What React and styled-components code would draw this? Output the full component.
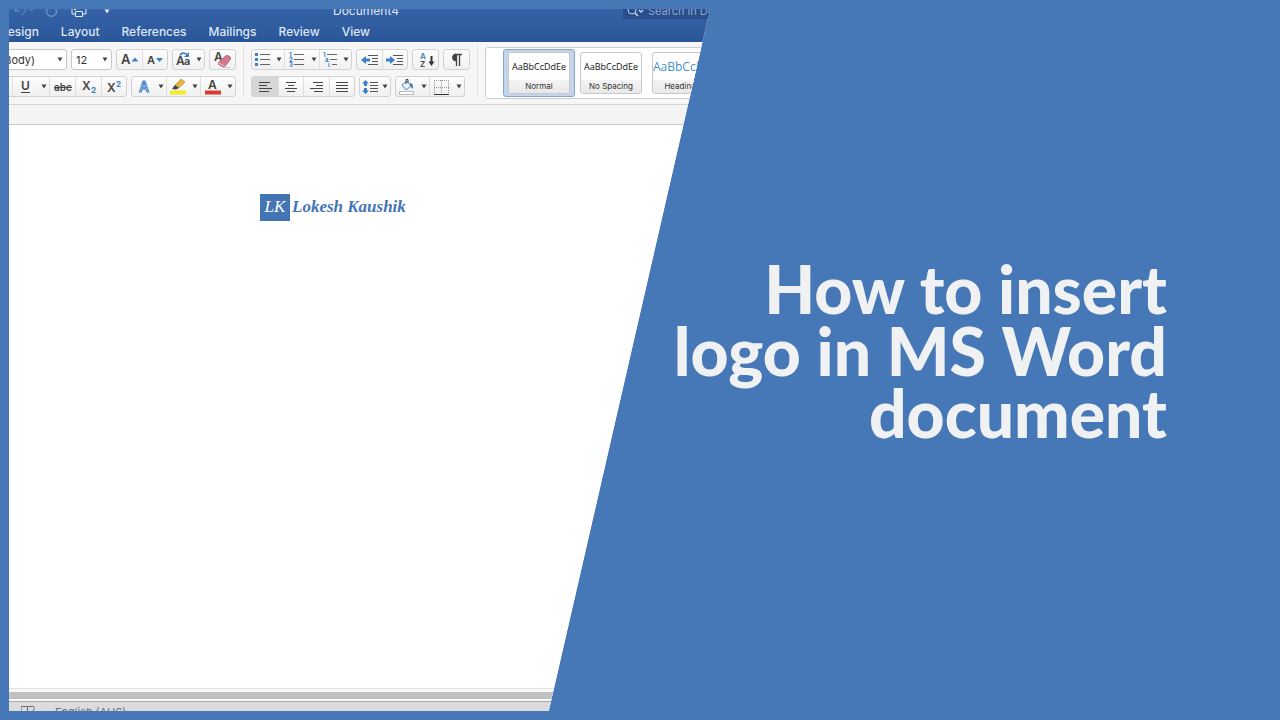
import styled, { createGlobalStyle } from 'styled-components';

const GlobalStyle = createGlobalStyle`
  * {
    box-sizing: border-box;
  }
  body {
    margin: 0;
    background: #4677b7;
    font-family: Inter, 'Liberation Sans', sans-serif;
  }
  button, select, input {
    font-family: inherit;
    margin: 0;
    padding: 0;
  }
`;

const Page = styled.main`
  display: grid;
  grid-template-columns: 540fr 161fr 570fr;
  min-height: 100vh;
  padding: 9px 0 9px 9px;
  background: #4677b7;
`;

const WordWindow = styled.section`
  grid-column: 1 / 3;
  grid-row: 1;
  display: flex;
  flex-direction: column;
  min-width: 0;
  overflow: hidden;
  background: #fff;
  clip-path: polygon(0 0, 100% 0, 77% 100%, 0 100%);
`;

const Header = styled.header`
  height: 33px;
  background: linear-gradient(#3663a7, #2a5699);
`;

const TitleBar = styled.div`
  display: grid;
  grid-template-columns: 324px 1fr 87px;
  align-items: center;
  height: 20px;
  margin-top: -8px;
  color: #dfe7f3;
  font-size: 12px;
  line-height: 16px;
`;

const QuickAccess = styled.div`
  display: flex;
  align-items: center;
  height: 20px;
`;

const QuickButton = styled.button`
  display: flex;
  align-items: center;
  justify-content: center;
  width: 28px;
  height: 20px;
  border: 0;
  background: none;
  color: ${({ $dim }) => ($dim ? '#6f90c2' : '#e6edf7')};
`;

const SearchBox = styled.label`
  display: flex;
  align-items: center;
  gap: 4px;
  height: 16px;
  padding-left: 4px;
  background: #284f8b;
  color: #c6d3e8;
  svg {
    flex: none;
  }
  input {
    flex: 1;
    min-width: 0;
    border: 0;
    background: none;
    font-size: 11px;
    line-height: 16px;
  }
  input::placeholder {
    color: #8ea6cc;
  }
`;

const Tabs = styled.nav`
  display: flex;
  gap: 22px;
  height: 21px;
  margin-left: -10px;
`;

const Tab = styled.button`
  border: 0;
  background: none;
  color: #dde6f4;
  font-size: 12px;
  font-weight: 500;
  line-height: 21px;
`;

const Ribbon = styled.div`
  display: flex;
  height: 63px;
  padding: 7px 0;
  border-bottom: 1px solid #d4d4d4;
  background: #f6f6f6;
`;

const RibbonGroup = styled.div`
  display: flex;
  flex: none;
  flex-direction: column;
  gap: 6px;
  width: ${({ $width }) => $width}px;
  overflow: hidden;
`;

const Row = styled.div`
  display: flex;
  gap: 4px;
  height: 21px;
  justify-content: ${({ $end }) => ($end ? 'flex-end' : 'flex-start')};
`;

const Separator = styled.div`
  flex: none;
  width: 1px;
  margin: -4px 7px 0 7px;
  background: #e2e2e2;
`;

const ButtonSet = styled.div`
  display: flex;
  flex: none;
  height: 21px;
  border: 1px solid #d2d2d2;
  border-radius: 3px;
  background: linear-gradient(#fdfdfd, #f0f0f0);
  overflow: hidden;
`;

const ToolButton = styled.button`
  display: flex;
  align-items: center;
  justify-content: center;
  flex: none;
  width: ${({ $width }) => $width}px;
  height: 19px;
  border: 0;
  border-left: ${({ $divider }) => ($divider ? '1px solid #dedede' : '0')};
  background: ${({ $active }) => ($active ? '#d6d6d6' : 'none')};
  color: #444;
`;

const SelectBox = styled.label`
  display: flex;
  align-items: center;
  flex: none;
  width: ${({ $width }) => $width}px;
  height: 21px;
  border: 1px solid #c6c6c6;
  border-radius: 3px;
  background: #fff;
  color: #444;
  select {
    flex: 1;
    min-width: 0;
    padding: 0 ${({ $gap }) => $gap}px 0 4px;
    border: 0;
    appearance: none;
    background: none;
    color: #333;
    font-size: 11px;
    line-height: 18px;
    text-align-last: ${({ $align }) => $align || 'left'};
  }
  svg {
    flex: none;
    margin-right: 3px;
  }
`;

const Gallery = styled.div`
  display: flex;
  flex: 1 0 240px;
  gap: 4px;
  height: 52px;
  margin-top: -2px;
  padding: 1px 0 0 17px;
  border: 1px solid #cdcdcd;
  border-radius: 3px;
  background: #fff;
`;

const StyleTile = styled.button`
  flex: none;
  width: ${({ $selected }) => ($selected ? 72 : 68)}px;
  height: 48px;
  padding: 2px ${({ $selected }) => ($selected ? 4 : 0)}px;
  border: 1px solid ${({ $selected }) => ($selected ? '#86a3cb' : 'transparent')};
  border-radius: 3px;
  background: ${({ $selected }) => ($selected ? '#c5d5e9' : 'none')};
`;

const StyleCard = styled.span`
  display: flex;
  flex-direction: column;
  width: 62px;
  height: 42px;
  border: 1px solid #c9c9c9;
  border-radius: 3px;
  background: #fff;
  overflow: hidden;
`;

const Sample = styled.span`
  height: 27px;
  color: ${({ $color }) => $color || '#111'};
  font-family: 'Open Sans', sans-serif;
  font-size: ${({ $size }) => $size || 9}px;
  line-height: 27px;
  text-align: ${({ $size }) => ($size ? 'left' : 'center')};
  white-space: nowrap;
`;

const StyleName = styled.span`
  flex: 1;
  background: linear-gradient(#f4f4f4, #e8e8e8);
  color: #333;
  font-size: 8px;
  line-height: 13px;
  text-align: center;
`;

const Ruler = styled.div`
  height: 20px;
  border-bottom: 1px solid #cacaca;
  background: #f4f4f4;
`;

const Paper = styled.article`
  flex: 1;
  padding: 69px 0 0 251px;
  background: #fff;
`;

const Brand = styled.div`
  display: flex;
  gap: 2px;
  color: #4374b4;
  font-family: 'Liberation Serif', serif;
  font-size: 17px;
  font-style: italic;
  font-weight: 700;
  line-height: 26px;
  white-space: nowrap;
`;

const Monogram = styled.span`
  width: 30px;
  height: 27px;
  background: #4374b4;
  color: #fff;
  font-weight: 400;
  text-align: center;
`;

const ScrollTrack = styled.div`
  height: 13px;
  padding: 3px 0;
  border-top: 1px solid #e0e0e0;
  background: #f8f8f8;
`;

const ScrollThumb = styled.div`
  height: 7px;
  background: #c0c0c0;
`;

const StatusBar = styled.footer`
  display: flex;
  gap: 20px;
  height: 10px;
  padding: 3px 0 0 12px;
  border-top: 1px solid #a9a9a9;
  background: #dcdcdc;
  color: #707070;
  font-size: 11px;
  line-height: 14px;
  overflow: hidden;
  svg {
    flex: none;
  }
`;

const Headline = styled.h1`
  grid-column: 2 / 4;
  grid-row: 1;
  align-self: center;
  z-index: 1;
  margin: 0;
  padding: 0 113px 18px 0;
  color: #f0f1f3;
  font-family: Lato, sans-serif;
  font-size: 66px;
  font-weight: 900;
  line-height: 62px;
  text-align: right;
  white-space: nowrap;
  span {
    display: block;
  }
`;

const tabs = ['Design', 'Layout', 'References', 'Mailings', 'Review', 'View'];

const blue = '#3b80c8';

const Icon = ({ width = 20, height = 18, children }) => (
  <svg width={width} height={height} viewBox={`0 0 ${width} ${height}`} fill='none' stroke='currentColor' aria-hidden='true'>
    {children}
  </svg>
);

const Caret = () => (
  <Icon width={6} height={5}>
    <path d='M.5 .5h5L3 4.500z' fill='currentColor' stroke='none' />
  </Icon>
);

const Letter = ({ x, y, size, color = '#444', weight = 600, children, ...rest }) => (
  <text x={x} y={y} fontSize={size} fontWeight={weight} fill={color} stroke='none' {...rest}>
    {children}
  </text>
);

const Tool = ({ label, width = 26, ...rest }) => <ToolButton type='button' aria-label={label} $width={width} {...rest} />;

const MenuTool = ({ label, width = 11, divider }) => (
  <Tool label={label} width={width} $divider={divider}>
    <Caret />
  </Tool>
);

const FontTools = () => (
  <RibbonGroup $width={227}>
    <Row $end>
      <SelectBox $width={130} $gap={22} $align='right'>
        <select aria-label='Font' defaultValue='Calibri (Body)'>
          <option>Calibri (Body)</option>
        </select>
        <Caret />
      </SelectBox>
      <SelectBox $width={41} $gap={0}>
        <select aria-label='Font size' defaultValue='12'>
          <option>12</option>
        </select>
        <Caret />
      </SelectBox>
      <ButtonSet>
        <Tool label='Increase font size' width={25}>
          <Icon>
            <Letter x={1} y={13} size={13}>A</Letter>
            <path d='M11.500 10.500l3.500-4 3.500 4z' fill={blue} stroke='none' />
          </Icon>
        </Tool>
        <Tool label='Decrease font size' width={25} $divider>
          <Icon>
            <Letter x={2} y={13} size={11}>A</Letter>
            <path d='M11 7h7l-3.500 4z' fill={blue} stroke='none' />
          </Icon>
        </Tool>
      </ButtonSet>
      <ButtonSet>
        <Tool label='Change case' width={20}>
          <Icon width={18}>
            <Letter x={2} y={14} size={12}>A</Letter>
            <Letter x={10} y={14} size={11}>a</Letter>
            <path d='M6 4.500c1-3 5-3 7-1' stroke={blue} strokeWidth='1.600' />
            <path d='M15 1v5h-5z' fill={blue} stroke='none' />
          </Icon>
        </Tool>
        <MenuTool label='Case options' />
      </ButtonSet>
      <ButtonSet>
        <Tool label='Clear formatting' width={25}>
          <Icon>
            <Letter x={1} y={10} size={12}>A</Letter>
            <path d='M5.500 11.500l7-6.500q1.200-1 2.500-.4l2 1.200q1.200 1 .4 2.500l-5 6.500q-1 1.200-2.500.7l-3.500-1.500q-1.800-1-.9-2.500z' fill='#d6788c' stroke='#a8556a' strokeWidth='.8' />
            <path d='M5.500 12l6 3' stroke='#f3c3cc' />
            <path d='M9 16.500h8' stroke='#c9a9af' strokeWidth='.6' />
          </Icon>
        </Tool>
      </ButtonSet>
    </Row>
    <Row $end>
      <ButtonSet>
        <Tool label='Italic' width={26}>
          <Icon>
            <Letter x={8} y={14} size={12} fontStyle='italic'>I</Letter>
          </Icon>
        </Tool>
        <Tool label='Underline' width={26} $divider>
          <Icon>
            <Letter x={5} y={12} size={12}>U</Letter>
            <path d='M5 14.500h9' stroke='#444' />
          </Icon>
        </Tool>
        <MenuTool label='Underline style' />
        <Tool label='Strikethrough' width={26} $divider>
          <Icon>
            <Letter x={1} y={13} size={10}>abc</Letter>
            <path d='M1 9.500h18' stroke='#444' />
          </Icon>
        </Tool>
        <Tool label='Subscript' $divider>
          <Icon>
            <Letter x={3} y={12} size={12}>X</Letter>
            <Letter x={12} y={15} size={8} color={blue} weight={700}>2</Letter>
          </Icon>
        </Tool>
        <Tool label='Superscript' width={25} $divider>
          <Icon>
            <Letter x={3} y={14} size={12}>X</Letter>
            <Letter x={12} y={9} size={8} color={blue} weight={700}>2</Letter>
          </Icon>
        </Tool>
      </ButtonSet>
      <ButtonSet>
        <Tool label='Text effects' width={23}>
          <Icon>
            <Letter x={5} y={14} size={14} color='#fff' weight={500} style={{ stroke: blue }}>A</Letter>
          </Icon>
        </Tool>
        <MenuTool label='More text effects' />
        <Tool label='Highlight' width={23} $divider>
          <Icon>
            <path d='M2 14.500h16' stroke='#f3ea2c' strokeWidth='4' />
            <path d='M7 7l6-6 4 3-6 6z' fill='#e8b23e' stroke='#b98a2e' strokeWidth='.6' />
            <path d='M4 11l3-4 4 3-3 1.500z' fill='#444' stroke='none' />
          </Icon>
        </Tool>
        <MenuTool label='Highlight colour' />
        <Tool label='Font colour' width={24} $divider>
          <Icon>
            <Letter x={5} y={11} size={12}>A</Letter>
            <path d='M2 14.500h16' stroke='#d83c2e' strokeWidth='4' />
          </Icon>
        </Tool>
        <MenuTool label='More font colours' />
      </ButtonSet>
    </Row>
  </RibbonGroup>
);

const ParagraphTools = () => (
  <RibbonGroup $width={219}>
    <Row>
      <ButtonSet>
        <Tool label='Bullets' width={21}>
          <Icon width={18}>
            <path d='M6 3.500h10M6 8.500h10M6 13.500h10' stroke='#666' />
            <path d='M1 3.500h3M1 8.500h3M1 13.500h3' stroke={blue} strokeWidth='3' />
          </Icon>
        </Tool>
        <MenuTool label='Bullet style' />
        <Tool label='Numbering' width={24} $divider>
          <Icon width={18}>
            <path d='M6 3.500h10M6 8.500h10M6 13.500h10' stroke='#666' />
            <Letter x={1} y={6} size={6} color={blue} weight={700}>1</Letter>
            <Letter x={1} y={11} size={6} color={blue} weight={700}>2</Letter>
            <Letter x={1} y={16} size={6} color={blue} weight={700}>3</Letter>
          </Icon>
        </Tool>
        <MenuTool label='Number style' />
        <Tool label='Multilevel list' width={21} $divider>
          <Icon width={18}>
            <path d='M6 3.500h10M9 8.500h7M11 13.500h5' stroke='#666' />
            <Letter x={2} y={6} size={6} color={blue} weight={700}>1</Letter>
            <Letter x={4} y={11} size={6} color={blue} weight={700}>a</Letter>
            <Letter x={7} y={16} size={6} color={blue} weight={700}>i</Letter>
          </Icon>
        </Tool>
        <MenuTool label='List style' />
      </ButtonSet>
      <ButtonSet>
        <Tool label='Decrease indent' width={25}>
          <Icon>
            <path d='M8 4.500h10M12 7.500h6M12 10.500h6M8 13.500h10' stroke='#555' />
            <path d='M1 9l5-4v2.500h4v3H6V13z' fill={blue} stroke='none' />
          </Icon>
        </Tool>
        <Tool label='Increase indent' width={25} $divider>
          <Icon>
            <path d='M8 4.500h10M12 7.500h6M12 10.500h6M8 13.500h10' stroke='#555' />
            <path d='M10 9L5 5v2.500H1v3h4V13z' fill={blue} stroke='none' />
          </Icon>
        </Tool>
      </ButtonSet>
      <ButtonSet>
        <Tool label='Sort' width={25}>
          <Icon>
            <Letter x={4} y={8} size={8} color={blue}>A</Letter>
            <Letter x={4} y={16} size={8}>Z</Letter>
            <path d='M15.500 5v7' stroke='#333' strokeWidth='2' />
            <path d='M12.500 10.500h6l-3 4.500z' fill='#333' stroke='none' />
          </Icon>
        </Tool>
      </ButtonSet>
      <ButtonSet>
        <Tool label='Show paragraph marks' width={25}>
          <Icon>
            <path d='M9 3a3.500 3.500 0 0 0 0 7z' fill='#444' stroke='#444' />
            <path d='M8 3.500h7M9.500 3v12M12.500 3v12' stroke='#444' strokeWidth='1.300' />
          </Icon>
        </Tool>
      </ButtonSet>
    </Row>
    <Row>
      <ButtonSet>
        <Tool label='Align left' width={26} $active>
          <Icon width={16}>
            <path d='M2 4.500h11M2 7.500h8M2 10.500h13M2 13.500h10' stroke='#444' />
          </Icon>
        </Tool>
        <Tool label='Centre' width={25} $divider>
          <Icon width={16}>
            <path d='M3 4.500h10M5 7.500h6M2 10.500h12M4 13.500h8' stroke='#444' />
          </Icon>
        </Tool>
        <Tool label='Align right' width={26} $divider>
          <Icon width={16}>
            <path d='M4 4.500h10M7 7.500h7M1 10.500h13M5 13.500h9' stroke='#444' />
          </Icon>
        </Tool>
        <Tool label='Justify' width={25} $divider>
          <Icon width={16}>
            <path d='M2 4.500h12M2 7.500h12M2 10.500h12M2 13.500h12' stroke='#444' />
          </Icon>
        </Tool>
      </ButtonSet>
      <ButtonSet>
        <Tool label='Line spacing' width={19}>
          <Icon width={18}>
            <path d='M9 4.500h8M9 7.500h8M9 10.500h8M9 13.500h8' stroke='#555' />
            <path d='M4.500 2L8 5.500H6V8H3V5.500H1zM4.500 16L8 12.500H6V10H3v2.500H1z' fill={blue} stroke='none' />
          </Icon>
        </Tool>
        <MenuTool label='Spacing options' />
      </ButtonSet>
      <ButtonSet>
        <Tool label='Shading' width={22}>
          <Icon>
            <path d='M2.500 13.500h14v3h-14z' fill='#fff' stroke='#bbb' />
            <path d='M5 7l5-4 4 5-5 4z' fill='#e9f1fa' stroke='#4f86c2' />
            <path d='M9 6V1.500h2V5' stroke='#444' />
            <path d='M13 5c3 0 3 3 3 6l-3-3z' fill={blue} stroke='none' />
          </Icon>
        </Tool>
        <MenuTool label='Shading colour' />
        <Tool label='Borders' width={24} $divider>
          <Icon>
            <path d='M2.500 2v14M9.500 2v14M16.500 2v14M2 2.500h15M2 9.500h15' stroke='#999' strokeDasharray='1 1' />
            <path d='M2 16.500h15' stroke='#333' />
          </Icon>
        </Tool>
        <MenuTool label='Border style' />
      </ButtonSet>
    </Row>
  </RibbonGroup>
);

const StyleOption = ({ name, selected, color, size, text = 'AaBbCcDdEe' }) => (
  <StyleTile type='button' $selected={selected}>
    <StyleCard>
      <Sample $color={color} $size={size}>{text}</Sample>
      <StyleName>{name}</StyleName>
    </StyleCard>
  </StyleTile>
);

const App = () => {
  return (
    <>
      <GlobalStyle />
      <Page>
        <WordWindow>
          <Header>
            <TitleBar>
              <QuickAccess>
                <QuickButton type='button' aria-label='Undo' $dim>
                  <Icon>
                    <path d='M2 4v5h5M2 9l5-5c5-2 8 5 2 9M17 8h5' />
                  </Icon>
                </QuickButton>
                <QuickButton type='button' aria-label='Redo' $dim>
                  <Icon>
                    <path d='M8 5a5 5 0 1 0 5 0M15 2v4h-4' strokeWidth='1.500' />
                  </Icon>
                </QuickButton>
                <QuickButton type='button' aria-label='Print'>
                  <Icon>
                    <path d='M6 6V2h8v4M6 12H3V5h14v7h-3M6.500 9.500h7v5h-7zM5 7.500h2' />
                  </Icon>
                </QuickButton>
                <QuickButton type='button' aria-label='Customise toolbar'>
                  <Caret />
                </QuickButton>
              </QuickAccess>
              <span>Document4</span>
              <SearchBox>
                <Icon width={17} height={14}>
                  <circle cx='5' cy='6' r='4' />
                  <path d='M8 9l3 3M12 6l2 2 2-2' strokeWidth='1.500' />
                </Icon>
                <input aria-label='Search' placeholder='Search in Document' />
              </SearchBox>
            </TitleBar>
            <Tabs>
              {tabs.map((tab) => (
                <Tab key={tab} type='button'>{tab}</Tab>
              ))}
            </Tabs>
          </Header>
          <Ribbon>
            <FontTools />
            <Separator />
            <ParagraphTools />
            <Separator />
            <Gallery>
              <StyleOption name='Normal' selected />
              <StyleOption name='No Spacing' />
              <StyleOption name='Heading 1' color='#4a8ec6' size={12} text='AaBbCcDc' />
            </Gallery>
          </Ribbon>
          <Ruler />
          <Paper>
            <Brand>
              <Monogram>LK</Monogram>
              <span>Lokesh Kaushik</span>
            </Brand>
          </Paper>
          <ScrollTrack>
            <ScrollThumb />
          </ScrollTrack>
          <StatusBar>
            <Icon width={14} height={14}>
              <path d='M0 1.500h6.500v12M0 1v12M7 1.500h6M9 6l2 2 3-6' />
            </Icon>
            <span>English (AUS)</span>
          </StatusBar>
        </WordWindow>
        <Headline>
          <span>How to insert</span>
          <span>logo in MS Word</span>
          <span>document</span>
        </Headline>
      </Page>
    </>
  );
};

export default App;
